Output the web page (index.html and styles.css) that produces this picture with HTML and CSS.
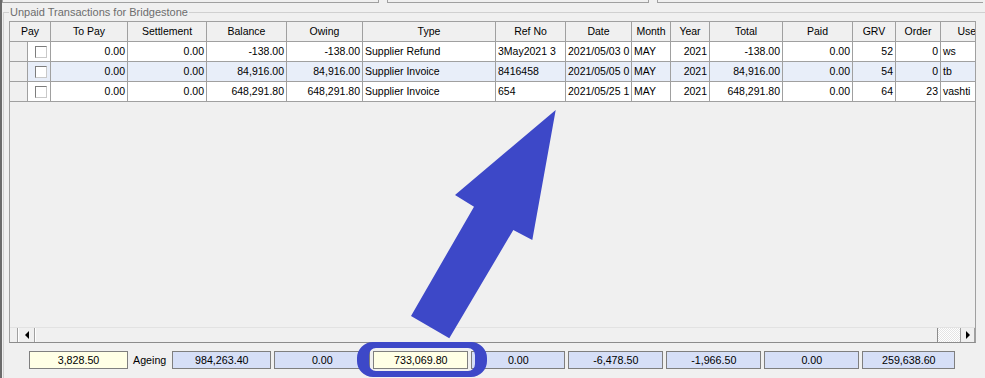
FILE: index.html
```html
<!DOCTYPE html>
<html>
<head>
<meta charset="utf-8">
<link rel="stylesheet" href="styles.css">
</head>
<body>
<div class="window">
  <div class="topbars">
    <div class="topbar tb1"></div>
    <div class="topbar tb2"></div>
    <div class="topbar tb3"></div>
  </div>
  <fieldset class="group">
    <legend class="group-title">Unpaid Transactions for Bridgestone</legend>
    <div class="grid">
      <div class="grid-body">
        <div class="tbl">
          <div class="c h span2">Pay</div>
          <div class="c h">To Pay</div>
          <div class="c h">Settlement</div>
          <div class="c h">Balance</div>
          <div class="c h">Owing</div>
          <div class="c h">Type</div>
          <div class="c h">Ref No</div>
          <div class="c h">Date</div>
          <div class="c h">Month</div>
          <div class="c h">Year</div>
          <div class="c h">Total</div>
          <div class="c h">Paid</div>
          <div class="c h">GRV</div>
          <div class="c h">Order</div>
          <div class="c h">User</div>

          <div class="c ind"></div>
          <div class="c chk"><span class="box"></span></div>
          <div class="c r">0.00</div>
          <div class="c r">0.00</div>
          <div class="c r">-138.00</div>
          <div class="c r">-138.00</div>
          <div class="c">Supplier Refund</div>
          <div class="c">3May2021 3</div>
          <div class="c">2021/05/03 0</div>
          <div class="c">MAY</div>
          <div class="c r">2021</div>
          <div class="c r">-138.00</div>
          <div class="c r">0.00</div>
          <div class="c r">52</div>
          <div class="c r">0</div>
          <div class="c">ws</div>

          <div class="c ind"></div>
          <div class="c chk sel"><span class="box"></span></div>
          <div class="c r sel">0.00</div>
          <div class="c r sel">0.00</div>
          <div class="c r sel">84,916.00</div>
          <div class="c r sel">84,916.00</div>
          <div class="c sel">Supplier Invoice</div>
          <div class="c sel">8416458</div>
          <div class="c sel">2021/05/05 0</div>
          <div class="c sel">MAY</div>
          <div class="c r sel">2021</div>
          <div class="c r sel">84,916.00</div>
          <div class="c r sel">0.00</div>
          <div class="c r sel">54</div>
          <div class="c r sel">0</div>
          <div class="c sel">tb</div>

          <div class="c ind"></div>
          <div class="c chk"><span class="box"></span></div>
          <div class="c r">0.00</div>
          <div class="c r">0.00</div>
          <div class="c r">648,291.80</div>
          <div class="c r">648,291.80</div>
          <div class="c">Supplier Invoice</div>
          <div class="c">654</div>
          <div class="c">2021/05/25 1</div>
          <div class="c">MAY</div>
          <div class="c r">2021</div>
          <div class="c r">648,291.80</div>
          <div class="c r">0.00</div>
          <div class="c r">64</div>
          <div class="c r">23</div>
          <div class="c">vashti</div>
        </div>
      </div>
      <div class="hscroll">
        <div class="hs-fixed"></div>
        <div class="hs-btn hs-left"></div>
        <div class="hs-thumb"></div>
        <div class="hs-track"></div>
        <div class="hs-btn hs-right"></div>
      </div>
    </div>
    <div class="totals">
      <div class="fld yellow w99">3,828.50</div>
      <span class="lbl">Ageing</span>
      <div class="fld blue w99">984,263.40</div>
      <div class="fld blue w96">0.00</div>
      <div class="fld yellow w95">733,069.80</div>
      <div class="fld blue w94">0.00</div>
      <div class="fld blue w95">-6,478.50</div>
      <div class="fld blue w95">-1,966.50</div>
      <div class="fld blue w95">0.00</div>
      <div class="fld blue w93">259,638.60</div>
    </div>
  </fieldset>

  <svg class="overlay" width="985" height="378" viewBox="0 0 985 378">
    <polygon fill="#3d48c8" points="555.7,110 532.3,240 513.3,230 449.3,338.3 411,316 474,206.7 455,195"/>
    <path fill="#3d48c8" fill-rule="evenodd" d="M373,342 H471 A16,16 0 0 1 487,358 V361 A16,16 0 0 1 471,377 H373 A16,16 0 0 1 357,361 V358 A16,16 0 0 1 373,342 Z M376,348 H468 A7,7 0 0 1 475,355 V364 A7,7 0 0 1 468,371 H376 A7,7 0 0 1 369,364 V355 A7,7 0 0 1 376,348 Z"/>
  </svg>
</div>
</body>
</html>
```
FILE: styles.css
```css
* { box-sizing: border-box; }
html, body { margin: 0; padding: 0; }
body {
  width: 985px;
  height: 378px;
  overflow: hidden;
  background: #f0f0f0;
  font-family: "Liberation Sans", Arial, sans-serif;
  font-size: 10.5px;
  color: #000;
}
.window {
  position: relative;
  height: 378px;
  overflow: hidden;
  border-left: 2px solid #6b6b6b;
}
.topbars {
  display: flex;
  gap: 8px;
  height: 3px;
}
.topbar {
  height: 3px;
  border: 1px solid #a0a0a0;
  border-top: 0;
  flex: none;
}
.tb1 { width: 377px; }
.tb2 { width: 262px; }
.tb3 { width: 326px; border-right: 0; }

.group {
  margin: 3px 0 0 1px;
  padding: 2px 0 0 5px;
  border: 1px solid #d0d0d0;
  border-right: 0;
  border-bottom: 0;
  width: 982px;
  height: 372px;
  min-inline-size: 0;
}
.group-title {
  padding: 0 1px;
  margin: 0;
  line-height: 13px;
  font-size: 11px;
  color: #6d6d6d;
}

.grid {
  width: 967px;
  height: 322px;
  border: 1px solid #a0a0a0;
  border-bottom-color: #8c8c8c;
  display: flex;
  flex-direction: column;
  overflow: hidden;
}
.grid-body {
  flex: 1;
  overflow: hidden;
}
.tbl {
  display: grid;
  grid-template-columns: 18px 23px 77px 79px 80px 76px 133px 70px 66px 39px 39px 73px 70px 43px 45px 56px;
  grid-auto-rows: 20px;
  width: max-content;
}
.c {
  border-right: 1px solid #a0a0a0;
  border-bottom: 1px solid #a0a0a0;
  background: #fff;
  padding: 0 2px 0 2px;
  white-space: nowrap;
  overflow: hidden;
  line-height: 19px;
}
.h {
  background: #f0f0f0;
  text-align: center;
  padding: 0 2px;
}
.span2 { grid-column: span 2; }
.r { text-align: right; }
.ind { background: #f0f0f0; }
.sel { background: #e8eef9; }
.chk {
  display: flex;
  align-items: center;
  padding-left: 7px;
}
.box {
  width: 12px;
  height: 12px;
  background: #fff;
  border: 1px solid #c9c9c9;
  border-top-color: #7d7d7d;
  border-left-color: #7d7d7d;
}

.hscroll {
  height: 15px;
  display: flex;
  flex: none;
  border-top: 1px solid #e2e2e2;
}
.hs-fixed {
  width: 8px;
  border-right: 1px solid #a0a0a0;
}
.hs-btn {
  display: flex;
  align-items: center;
  justify-content: center;
  background: #f0f0f0;
  border-right: 1px solid #a0a0a0;
  border-left: 1px solid #fff;
}
.hs-left { width: 17px; }
.hs-right { width: 15px; border-left: 1px solid #a0a0a0; }
.hs-left::before {
  content: "";
  border-right: 4px solid #000;
  border-top: 4px solid transparent;
  border-bottom: 4px solid transparent;
}
.hs-right::before {
  content: "";
  border-left: 4px solid #000;
  border-top: 4px solid transparent;
  border-bottom: 4px solid transparent;
}
.hs-thumb {
  width: 903px;
  flex: none;
  background: #f0f0f0;
  border-left: 1px solid #fff;
  border-right: 1px solid #8c8c8c;
}
.hs-track {
  flex: 1;
  background-color: #f4f4f4;
  background-image: repeating-conic-gradient(#ffffff 0 25%, #e4e4e4 0 50%);
  background-size: 2px 2px;
}

.totals {
  display: flex;
  align-items: center;
  gap: 3px;
  margin-top: 8px;
  padding-left: 20px;
  height: 18px;
  font-size: 10.7px;
}
.fld {
  flex: none;
  height: 18px;
  border: 1px solid #7f7f7f;
  text-align: center;
  line-height: 16px;
}
.yellow { background: #ffffe6; }
.blue { background: #d6dff7; }
.w99 { width: 99px; }
.w96 { width: 96px; }
.w95 { width: 95px; }
.w94 { width: 94px; }
.w93 { width: 93px; }
.lbl {
  margin: 0 3px 0 2px;
  line-height: 18px;
}

.overlay {
  position: absolute;
  left: -2px;
  top: 0;
  pointer-events: none;
}
```
